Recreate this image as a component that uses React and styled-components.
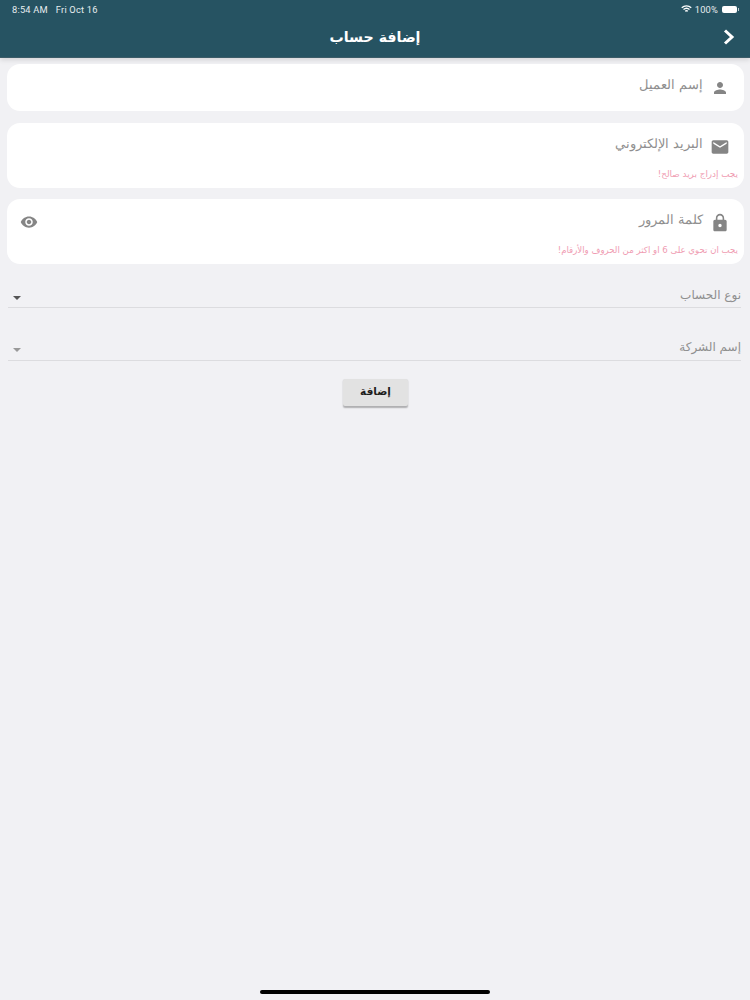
import React from "react";
import styled, { createGlobalStyle } from "styled-components";

const Global = createGlobalStyle`
  html, body { margin: 0; padding: 0; background: #f1f1f4; }
  body { font-family: "DejaVu Sans", "Noto Sans", sans-serif; }
`;

const Screen = styled.div`
  width: 750px;
  height: 1000px;
  background: #f1f1f4;
  display: flex;
  flex-direction: column;
  overflow: hidden;
`;

const Header = styled.header`
  height: 58px;
  background: #265362;
  border-bottom: 1px solid #3c5c68;
  box-shadow: 0 2px 5px rgba(0, 0, 0, 0.12);
  box-sizing: border-box;
  flex: none;
  display: flex;
  flex-direction: column;
  color: #fff;
`;

const StatusBar = styled.div`
  height: 18px;
  padding: 0 12px;
  display: flex;
  align-items: center;
  justify-content: space-between;
  font-family: "Roboto", "Liberation Sans", sans-serif;
  font-size: 9.3px;
  letter-spacing: 0.2px;
  color: #e6edef;
`;

const StatusGroup = styled.div`
  display: flex;
  align-items: center;
  gap: ${(p) => p.$gap}px;
`;

const Battery = styled.span`
  width: 15px;
  height: 7px;
  border-radius: 2px;
  background: #fff;
  margin-right: 1px;
  margin-left: 1px;
  position: relative;
  &::after {
    content: "";
    position: absolute;
    right: -2px;
    top: 2px;
    width: 1px;
    height: 3px;
    background: #b9c9ce;
  }
`;

const TitleBar = styled.div`
  flex: 1;
  padding: 0 14px;
  display: flex;
  align-items: center;
  justify-content: center;
  position: relative;
`;

const Title = styled.h1`
  margin: 0;
  font-size: 14.2px;
  font-weight: 700;
  line-height: 1;
  direction: rtl;
`;

const Back = styled.span`
  position: absolute;
  right: 14px;
  top: 10px;
  display: flex;
`;

const Form = styled.main`
  padding: 6px 6px 0 7px;
  display: flex;
  flex-direction: column;
  direction: rtl;
`;

const Card = styled.div`
  background: #fff;
  border-radius: 13px;
  height: ${(p) => p.$h}px;
  margin-bottom: ${(p) => p.$mb}px;
  padding: 13px 14px 0 14px;
  box-sizing: border-box;
  position: relative;
`;

const FieldRow = styled.div`
  display: flex;
  align-items: flex-start;
  gap: 7px;
`;

const FieldIcon = styled.span`
  width: 20px;
  height: 20px;
  margin-top: 1px;
  flex: none;
  display: flex;
  align-items: center;
  justify-content: center;
`;

const Placeholder = styled.span`
  font-size: 12.5px;
  line-height: 16px;
  color: #8f8f8f;
  font-weight: 300;
`;

const ErrorText = styled.div`
  position: absolute;
  right: 6px;
  bottom: 8px;
  font-size: ${(p) => p.$size}px;
  line-height: 11px;
  color: #ef9cb2;
`;

const Eye = styled.span`
  position: absolute;
  left: 13px;
  top: 14px;
  display: flex;
`;

const Select = styled.div`
  height: ${(p) => p.$h}px;
  margin: 0 3px 0 1px;
  border-bottom: 1px solid #dcdcdf;
  box-sizing: border-box;
  display: flex;
  align-items: flex-end;
  justify-content: space-between;
  padding: 0 0 ${(p) => p.$pb}px 5px;
`;

const SelectLabel = styled.span`
  font-size: 12px;
  line-height: 16px;
  color: #8f8f8f;
`;

const Caret = styled.span`
  width: 0;
  height: 0;
  border-left: 4px solid transparent;
  border-right: 4px solid transparent;
  border-top: 4px solid ${(p) => p.$color};
  margin-bottom: 3.5px;
`;

const ButtonRow = styled.div`
  display: flex;
  justify-content: center;
  margin-top: 18px;
`;

const Button = styled.button`
  width: 65px;
  height: 27px;
  padding: 0 0 3px;
  border: none;
  border-radius: 2px;
  background: #e2e2e2;
  box-shadow: 0 1.5px 1.5px rgba(0, 0, 0, 0.28);
  font-family: inherit;
  font-size: 10.5px;
  font-weight: 700;
  color: #1d1d1d;
`;

const HomeIndicator = styled.div`
  position: fixed;
  left: 260px;
  top: 990px;
  width: 230px;
  height: 4px;
  border-radius: 2px;
  background: #000;
`;

const Icon = ({ d, size = 20, color = "#858585" }) => (
  <svg width={size} height={size} viewBox="0 0 24 24" fill={color}>
    <path d={d} />
  </svg>
);

const PERSON = "M12 12c2.21 0 4-1.79 4-4s-1.79-4-4-4-4 1.79-4 4 1.79 4 4 4zm0 2c-2.67 0-8 1.34-8 4v2h16v-2c0-2.66-5.33-4-8-4z";
const MAIL = "M20 4H4c-1.1 0-1.99.9-1.99 2L2 18c0 1.1.9 2 2 2h16c1.1 0 2-.9 2-2V6c0-1.1-.9-2-2-2zm0 4l-8 5-8-5V6l8 5 8-5v2z";
const LOCK = "M18 8h-1V6c0-2.76-2.24-5-5-5S7 3.24 7 6v2H6c-1.1 0-2 .9-2 2v10c0 1.1.9 2 2 2h12c1.1 0 2-.9 2-2V10c0-1.1-.9-2-2-2zm-6 9c-1.1 0-2-.9-2-2s.9-2 2-2 2 .9 2 2-.9 2-2 2zm3.1-9H8.9V6c0-1.71 1.39-3.1 3.1-3.1 1.71 0 3.1 1.39 3.1 3.1v2z";
const EYE = "M12 4.5C7 4.5 2.73 7.61 1 12c1.73 4.39 6 7.5 11 7.5s9.27-3.11 11-7.5c-1.73-4.39-6-7.5-11-7.5zM12 17c-2.76 0-5-2.24-5-5s2.24-5 5-5 5 2.24 5 5-2.24 5-5 5zm0-8c-1.66 0-3 1.34-3 3s1.34 3 3 3 3-1.34 3-3-1.34-3-3-3z";

export default function App() {
  return (
    <Screen>
      <Global />
      <Header>
        <StatusBar>
          <StatusGroup $gap={8}>
            <span>8:54 AM</span>
            <span>Fri Oct 16</span>
          </StatusGroup>
          <StatusGroup $gap={3}>
            <svg width="11" height="8" viewBox="0 0 22 16" fill="none" stroke="#fff" strokeWidth="2.6">
              <path d="M1.5 5.5a14 14 0 0 1 19 0" />
              <path d="M5 9.2a9 9 0 0 1 12 0" />
              <path d="M8.4 12.6a4 4 0 0 1 5.2 0" />
            </svg>
            <span>100%</span>
            <Battery />
          </StatusGroup>
        </StatusBar>
        <TitleBar>
          <Title>إضافة حساب</Title>
          <Back>
            <svg width="14" height="18" viewBox="0 0 14 18" fill="none" stroke="#fff" strokeWidth="3">
              <path d="M3 2.5l7 6.5-7 6.5" />
            </svg>
          </Back>
        </TitleBar>
      </Header>
      <Form>
        <Card $h={47} $mb={12}>
          <FieldRow>
            <FieldIcon><Icon d={PERSON} size={18} /></FieldIcon>
            <Placeholder>إسم العميل</Placeholder>
          </FieldRow>
        </Card>
        <Card $h={65} $mb={11}>
          <FieldRow>
            <FieldIcon><Icon d={MAIL} /></FieldIcon>
            <Placeholder>البريد الإلكتروني</Placeholder>
          </FieldRow>
          <ErrorText $size={8.8}>يجب إدراج بريد صالح!</ErrorText>
        </Card>
        <Card $h={65} $mb={0}>
          <FieldRow>
            <FieldIcon><Icon d={LOCK} /></FieldIcon>
            <Placeholder>كلمة المرور</Placeholder>
          </FieldRow>
          <Eye><Icon d={EYE} size={18} /></Eye>
          <ErrorText $size={8.6}>يجب ان تحوي على 6 او اكثر من الحروف والأرقام!</ErrorText>
        </Card>
        <Select $h={44} $pb={4}>
          <SelectLabel>نوع الحساب</SelectLabel>
          <Caret $color="#555" />
        </Select>
        <Select $h={53} $pb={5}>
          <SelectLabel>إسم الشركة</SelectLabel>
          <Caret $color="#999" />
        </Select>
        <ButtonRow>
          <Button>إضافة</Button>
        </ButtonRow>
      </Form>
      <HomeIndicator />
    </Screen>
  );
}
